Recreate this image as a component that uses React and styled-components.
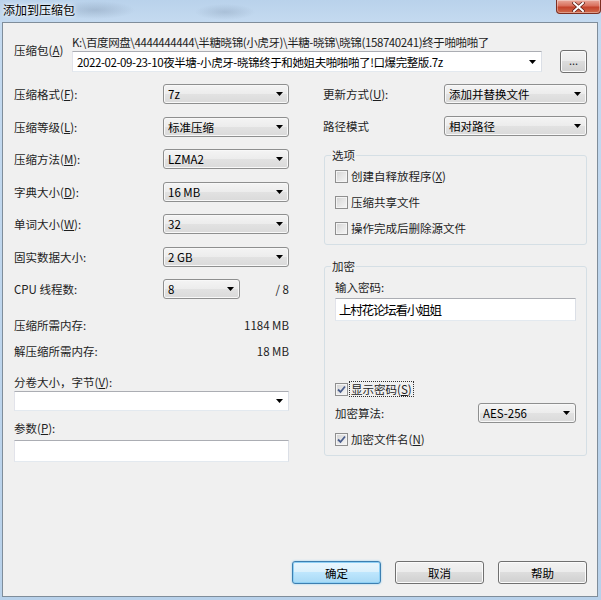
import React from 'react'
import styled, { createGlobalStyle } from 'styled-components'

const GlobalStyle = createGlobalStyle`
  html, body { margin: 0; padding: 0; }
  body {
    font-family: "Noto Sans CJK SC", sans-serif;
    font-size: 11.5px;
    color: #1e1e1e;
  }
`

//FRAME
const Window = styled.div`
  width: 601px;
  height: 600px;
  box-sizing: border-box;
  display: flex;
  flex-direction: column;
  padding: 0 3px 3px 2px;
  overflow: hidden;
  background:
    radial-gradient(ellipse 40px 9px at 95px 10px, rgba(120,140,165,0.35), transparent),
    radial-gradient(ellipse 30px 8px at 225px 12px, rgba(120,140,165,0.3), transparent),
    linear-gradient(180deg, #b9d2eb 0px, #c4daf0 22px, #b8d1ea 100%);
`
const TitleBar = styled.div`
  height: 22px;
  display: flex;
  align-items: flex-start;
  padding-left: 1px;
`
const Title = styled.div`
  margin-top: 2px;
  font-size: 12px;
  line-height: 16px;
  color: #000;
  text-shadow: 0 0 6px #fff, 0 0 3px #fff;
`
const CloseButton = styled.div`
  margin-left: auto;
  margin-right: -3px;
  width: 45px;
  height: 14px;
  box-sizing: border-box;
  display: flex;
  align-items: center;
  justify-content: center;
  border: 1px solid #7d2f22;
  border-top: none;
  border-radius: 0 0 4px 4px;
  background: linear-gradient(180deg, #e9a99b 0%, #d9705c 45%, #c4432b 55%, #cf6a4b 100%);
  box-shadow: inset 0 0 0 1px rgba(255,255,255,0.35);
`
const Client = styled.div`
  flex: 1;
  display: flex;
  flex-direction: column;
  border: 1px solid #7f8d9a;
  background: #f0f0f0;
  padding: 11px 10px 12px 11px;
`

//TOP
const ArchiveGrid = styled.div`
  display: grid;
  grid-template-columns: 58px 1fr 27px;
  grid-template-rows: 16px 23px;
  align-items: center;
`
const ArchiveLabel = styled.div`
  grid-row: 1 / 3;
  align-self: start;
  margin-top: 8px;
  line-height: 16px;
`
const PathText = styled.div`
  grid-column: 2 / 4;
  line-height: 16px;
  letter-spacing: -0.4px;
  white-space: nowrap;
  overflow: hidden;
`
const BrowseButton = styled.div`
  height: 23px;
  box-sizing: border-box;
  display: flex;
  align-items: center;
  justify-content: center;
  border: 1px solid #707070;
  border-radius: 3px;
  background: linear-gradient(180deg, #f2f2f2 0%, #ebebeb 50%, #dddddd 50%, #cfcfcf 100%);
  box-shadow: inset 0 0 0 1px #fbfbfb;
  font-size: 11px;
  line-height: 10px;
  padding-bottom: 4px;
`

//COMBO
const Combo = styled.div`
  height: ${p => p.$h || 20}px;
  width: ${p => (p.$w ? `${p.$w}px` : 'auto')};
  margin-right: ${p => p.$mr || 0}px;
  box-sizing: border-box;
  display: flex;
  align-items: center;
  padding: 0 5px 0 4px;
  border: 1px solid;
  border-color: ${p => (p.$editable ? '#abadb3 #dbdfe6 #e3e9ef #e2e3ea' : '#8e8f8f')};
  border-radius: ${p => (p.$editable ? 0 : 3)}px;
  background: ${p => (p.$editable
    ? '#fff'
    : 'linear-gradient(180deg, #f4f4f4 0%, #ececec 50%, #e2e2e2 50%, #dadada 100%)')};
  box-shadow: ${p => (p.$editable ? 'none' : 'inset 0 0 0 1px #f8f8f8')};
  white-space: nowrap;
  overflow: hidden;

  .value{
    flex: 1;
    overflow: hidden;
    color: #000;
    letter-spacing: ${p => (p.$tight ? '-0.4px' : 'normal')};
  }
  svg{
    flex-shrink: 0;
  }
`
const ComboBox = ({ value, ...rest }) => (
  <Combo {...rest}>
    <span className="value">{value}</span>
    <svg width="7" height="4" viewBox="0 0 7 4"><polygon points="0,0 7,0 3.5,4" fill="#000" /></svg>
  </Combo>
)
const TextInput = styled.div`
  height: ${p => p.$h || 22}px;
  box-sizing: border-box;
  display: flex;
  align-items: center;
  padding-left: 3px;
  border: 1px solid;
  border-color: #abadb3 #dbdfe6 #e3e9ef #e2e3ea;
  background: #fff;
  color: #000;

  &.big{
    font-size: 12.5px;
    letter-spacing: -1.2px;
  }
`

//COLUMNS
const Columns = styled.div`
  display: flex;
  gap: 34px;
  margin-top: 11px;
`
const LeftCol = styled.div`
  width: 275px;
  display: flex;
  flex-direction: column;
`
const RightCol = styled.div`
  width: 264px;
  display: flex;
  flex-direction: column;
`
const FieldGrid = styled.div`
  display: grid;
  grid-auto-rows: 20px;
  row-gap: ${p => p.$gap}px;
`
const FieldRow = styled.div`
  display: grid;
  grid-template-columns: ${p => p.$label}px 1fr;
  align-items: center;
  line-height: 16px;
`
const CpuCell = styled.div`
  display: flex;
  align-items: center;
  justify-content: space-between;
`
const InfoRow = styled.div`
  display: flex;
  justify-content: space-between;
  line-height: 16px;
  margin-top: ${p => p.$mt || 0}px;
`
const Label = styled.div`
  line-height: 16px;
  margin-top: ${p => p.$mt || 0}px;
`
const Spaced = styled.div`
  margin-top: ${p => p.$mt || 0}px;
`
const U = styled.span`
  text-decoration: underline;
  text-underline-offset: 1px;
`

//GROUPS
const Group = styled.fieldset`
  margin: ${p => p.$mt || 0}px 0 0 1px;
  padding: 0 10px ${p => p.$pb || 8}px 10px;
  border: 1px solid #d5dfe5;
  border-radius: 3px;
  min-width: 0;
  display: flex;
  flex-direction: column;

  legend{
    margin-left: -4px;
    padding: 0 1px;
    line-height: 16px;
  }
`
const CheckRow = styled.div`
  display: flex;
  align-items: center;
  gap: 1px;
  height: 16px;
  line-height: 16px;
  margin-top: ${p => p.$mt || 0}px;

  .text{
    padding: 0 1px;
    border: 1px dotted ${p => (p.$focus ? '#333' : 'transparent')};
    line-height: 14px;
  }
`
const Box = styled.span`
  width: 13px;
  height: 13px;
  box-sizing: border-box;
  display: flex;
  align-items: center;
  justify-content: center;
  border: 1px solid #8f8f8f;
  background: linear-gradient(135deg, #d2d2d2 0%, #e6e6e6 50%, #f6f6f6 100%);
  box-shadow: inset 0 0 0 1px #f4f4f4;
`
const CheckBox = ({ checked, label, focus, mt }) => (
  <CheckRow $mt={mt} $focus={focus}>
    <Box>
      {checked && (
        <svg width="9" height="9" viewBox="0 0 9 9">
          <path d="M1 4.5 L3.5 7 L8 1.5" fill="none" stroke="#4a5d8c" strokeWidth="1.8" />
        </svg>
      )}
    </Box>
    <span className="text">{label}</span>
  </CheckRow>
)

//BUTTONS
const ButtonBar = styled.div`
  margin-top: auto;
  display: flex;
  justify-content: flex-end;
  gap: 14px;
`
const Button = styled.div`
  width: 89px;
  height: 23px;
  box-sizing: border-box;
  display: flex;
  align-items: center;
  justify-content: center;
  border: 1px solid ${p => (p.$default ? '#3c7fb1' : '#707070')};
  border-radius: 3px;
  background: ${p => (p.$default
    ? 'linear-gradient(180deg, #eaf6fd 0%, #d9f0fc 50%, #bee6fd 50%, #a7d9f5 100%)'
    : 'linear-gradient(180deg, #f2f2f2 0%, #ebebeb 50%, #dddddd 50%, #cfcfcf 100%)')};
  box-shadow: ${p => (p.$default ? 'inset 0 0 0 1px #8ed0f5, 0 0 2px #7ec8f0' : 'inset 0 0 0 1px #fbfbfb')};
  color: #000;
`

const App = () => {
  return (
    <Window>
      <GlobalStyle />
      <TitleBar>
        <Title>添加到压缩包</Title>
        <CloseButton>
          <svg width="13" height="10" viewBox="0 0 13 10">
            <path d="M2 1 L11 9 M11 1 L2 9" stroke="#5a1a12" strokeWidth="3.4" strokeLinecap="square" />
            <path d="M2 1 L11 9 M11 1 L2 9" stroke="#fff" strokeWidth="2" strokeLinecap="square" />
          </svg>
        </CloseButton>
      </TitleBar>

      <Client>
        <ArchiveGrid>
          <ArchiveLabel>压缩包(<U>A</U>)</ArchiveLabel>
          <PathText>K:\百度网盘\4444444444\半糖晓锦(小虎牙)\半糖-晓锦\晓锦(158740241)终于啪啪啪了</PathText>
          <ComboBox $editable $tight $h={21} $mr={18} value="2022-02-09-23-10夜半塘-小虎牙-晓锦终于和她姐夫啪啪啪了!口爆完整版.7z" />
          <BrowseButton>...</BrowseButton>
        </ArchiveGrid>

        <Columns>
          <LeftCol>
            <FieldGrid $gap={12.5}>
              <FieldRow $label={149}><span>压缩格式(<U>F</U>):</span><ComboBox value="7z" /></FieldRow>
              <FieldRow $label={149}><span>压缩等级(<U>L</U>):</span><ComboBox value="标准压缩" /></FieldRow>
              <FieldRow $label={149}><span>压缩方法(<U>M</U>):</span><ComboBox value="LZMA2" /></FieldRow>
              <FieldRow $label={149}><span>字典大小(<U>D</U>):</span><ComboBox value="16 MB" /></FieldRow>
              <FieldRow $label={149}><span>单词大小(<U>W</U>):</span><ComboBox value="32" /></FieldRow>
              <FieldRow $label={149}><span>固实数据大小:</span><ComboBox value="2 GB" /></FieldRow>
              <FieldRow $label={149}>
                <span>CPU 线程数:</span>
                <CpuCell><ComboBox $w={77} value="8" /><span>/ 8</span></CpuCell>
              </FieldRow>
            </FieldGrid>

            <InfoRow $mt={18}><span>压缩所需内存:</span><span>1184 MB</span></InfoRow>
            <InfoRow $mt={10}><span>解压缩所需内存:</span><span>18 MB</span></InfoRow>

            <Label $mt={15}>分卷大小，字节(<U>V</U>):</Label>
            <Spaced $mt={1}><ComboBox $editable value="" /></Spaced>

            <Label $mt={9}>参数(<U>P</U>):</Label>
            <Spaced $mt={4}><TextInput $h={22} /></Spaced>
          </LeftCol>

          <RightCol>
            <FieldGrid $gap={12}>
              <FieldRow $label={121}><span>更新方式(<U>U</U>):</span><ComboBox value="添加并替换文件" /></FieldRow>
              <FieldRow $label={121}><span>路径模式</span><ComboBox value="相对路径" /></FieldRow>
            </FieldGrid>

            <Group $mt={11} $pb={8}>
              <legend>选项</legend>
              <CheckBox mt={5} label={<>创建自释放程序(<U>X</U>)</>} />
              <CheckBox mt={10} label="压缩共享文件" />
              <CheckBox mt={10} label="操作完成后删除源文件" />
            </Group>

            <Group $mt={13} $pb={8}>
              <legend>加密</legend>
              <Label $mt={5}>输入密码:</Label>
              <Spaced $mt={3}><TextInput className="big" $h={23}>上村花论坛看小姐姐</TextInput></Spaced>
              <CheckBox mt={60} checked focus label={<>显示密码(<U>S</U>)</>} />
              <Spaced $mt={6}>
                <FieldRow $label={143}><span>加密算法:</span><ComboBox value="AES-256" /></FieldRow>
              </Spaced>
              <CheckBox mt={8} checked label={<>加密文件名(<U>N</U>)</>} />
            </Group>
          </RightCol>
        </Columns>

        <ButtonBar>
          <Button $default>确定</Button>
          <Button>取消</Button>
          <Button>帮助</Button>
        </ButtonBar>
      </Client>
    </Window>
  )
}
export default App
